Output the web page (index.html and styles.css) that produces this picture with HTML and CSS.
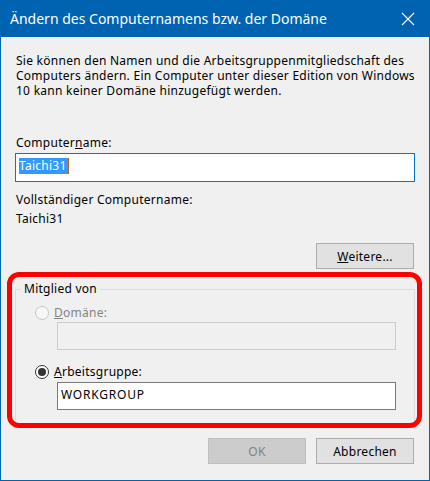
FILE: index.html
```html
<!DOCTYPE html>
<html lang="de">
<head>
<meta charset="utf-8">
<title>Ändern des Computernamens bzw. der Domäne</title>
<link rel="stylesheet" href="styles.css">
</head>
<body>
<div class="window">
  <div class="titlebar">
    <span class="title">Ändern des Computernamens bzw. der Domäne</span>
    <svg class="close" width="14" height="14" viewBox="0 0 14 14" aria-hidden="true">
      <path d="M1 1 L13 13 M13 1 L1 13" stroke="#ffffff" stroke-width="1.1" fill="none"/>
    </svg>
  </div>
  <div class="content">
    <p class="intro">Sie können den Namen und die Arbeitsgruppenmitgliedschaft des<br>Computers ändern. Ein Computer unter dieser Edition von Windows<br>10 kann keiner Domäne hinzugefügt werden.</p>
    <div class="label first-label">Computer<u>n</u>ame:</div>
    <div class="input focused"><span class="sel">Taichi31</span></div>
    <div class="label full-label">Vollständiger Computername:</div>
    <div class="label value">Taichi31</div>
    <div class="btn-row more-row"><button class="btn"><u>W</u>eitere...</button></div>
    <fieldset class="group">
      <legend>Mitglied von</legend>
      <div class="group-body">
        <div class="radio-row disabled first-radio"><span class="radio"></span><span class="radio-text"><u>D</u>omäne:</span></div>
        <div class="input group-input disabled-input"></div>
        <div class="radio-row second-radio"><span class="radio checked"></span><span class="radio-text"><u>A</u>rbeitsgruppe:</span></div>
        <div class="input group-input workgroup">WORKGROUP</div>
      </div>
    </fieldset>
    <div class="btn-row footer">
      <button class="btn btn-disabled" disabled>OK</button>
      <button class="btn">Abbrechen</button>
    </div>
  </div>
  <div class="annotation"></div>
</div>
</body>
</html>
```
FILE: styles.css
```css
* { box-sizing: border-box; }
html, body {
  margin: 0;
  padding: 0;
  background: #f0f0f0;
}
body {
  font-family: "Noto Sans", "Liberation Sans", Arial, sans-serif;
  font-size: 12px;
  letter-spacing: 0.26px;
  color: #000;
}
.window {
  position: relative;
  width: 430px;
  height: 481px;
  background: #f0f0f0;
  border-left: 1px solid #0063b1;
  border-right: 1px solid #0063b1;
  border-bottom: 1px solid #0063b1;
}
.titlebar {
  height: 37px;
  background: #0063b1;
  display: flex;
  align-items: center;
  justify-content: space-between;
  padding: 0 14px 0 9px;
  color: #fff;
}
.title {
  font-size: 14px;
  letter-spacing: 0;
  line-height: 18px;
  padding-top: 1px;
}
.close {
  display: block;
  margin-top: 1px;
}
.content {
  padding: 16px 14px 0 14px;
}
.intro {
  margin: 0;
  padding-left: 1px;
  line-height: 15px;
  white-space: nowrap;
}
.label {
  line-height: 15px;
  padding-left: 1px;
}
.first-label { margin-top: 37px; }
.full-label { margin-top: 10px; }
.value { margin-top: 4px; }
.input {
  background: #fff;
  border: 1px solid #7a7a7a;
  height: 28px;
  display: flex;
  align-items: center;
  padding-left: 3px;
  line-height: 15px;
}
.focused {
  margin-top: 3px;
  height: 29px;
  border-color: #0078d7;
  padding-bottom: 4px;
}
.sel {
  background: #3399ff;
  color: #fff;
  line-height: 16px;
  padding: 0 1px 0 0;
  border-right: 1px solid #c0601c;
}
.btn-row {
  display: flex;
  justify-content: flex-end;
  gap: 10px;
  padding-right: 1px;
}
.more-row { margin-top: 17px; }
.btn {
  font-family: "Noto Sans", "Liberation Sans", Arial, sans-serif;
  font-size: 12px;
  letter-spacing: 0.26px;
  color: #000;
  width: 98px;
  height: 26px;
  margin: 0;
  padding: 0;
  background: #e1e1e1;
  border: 1px solid #adadad;
  border-radius: 0;
}
.btn-disabled {
  background: #cccccc;
  border-color: #bfbfbf;
  color: #838383;
}
.group {
  margin: 13px 0 0 0;
  padding: 0;
  border: 1px solid #dcdcdc;
  min-width: 0;
}
.group legend {
  margin-left: 5px;
  padding: 0 3px;
  line-height: 14px;
}
.group-body {
  padding: 0 18px 13px 19px;
}
.radio-row {
  display: flex;
  align-items: center;
  gap: 5px;
  line-height: 15px;
  height: 15px;
}
.first-radio { margin-top: 9px; }
.second-radio { margin-top: 14px; }
.radio {
  width: 14px;
  height: 14px;
  border-radius: 50%;
  border: 1px solid #333;
  background: #fff;
  display: flex;
  align-items: center;
  justify-content: center;
  flex: none;
}
.radio.checked::after {
  content: "";
  width: 8px;
  height: 8px;
  border-radius: 50%;
  background: #333;
}
.disabled .radio {
  border-color: #c6c6c6;
  background: #f7f7f7;
}
.disabled .radio-text { color: #838383; }
.group-input {
  margin-left: 22px;
  margin-top: 2px;
}
.disabled-input {
  background: #f0f0f0;
  border-color: #cccccc;
}
.workgroup {
  margin-top: 3px;
  padding-bottom: 3px;
  letter-spacing: 0.8px;
}
.footer { margin-top: 14px; }
.annotation {
  position: absolute;
  left: 6px;
  top: 272px;
  width: 415px;
  height: 156px;
  border: 5px solid #ff0000;
  border-radius: 12px;
  pointer-events: none;
}
```
